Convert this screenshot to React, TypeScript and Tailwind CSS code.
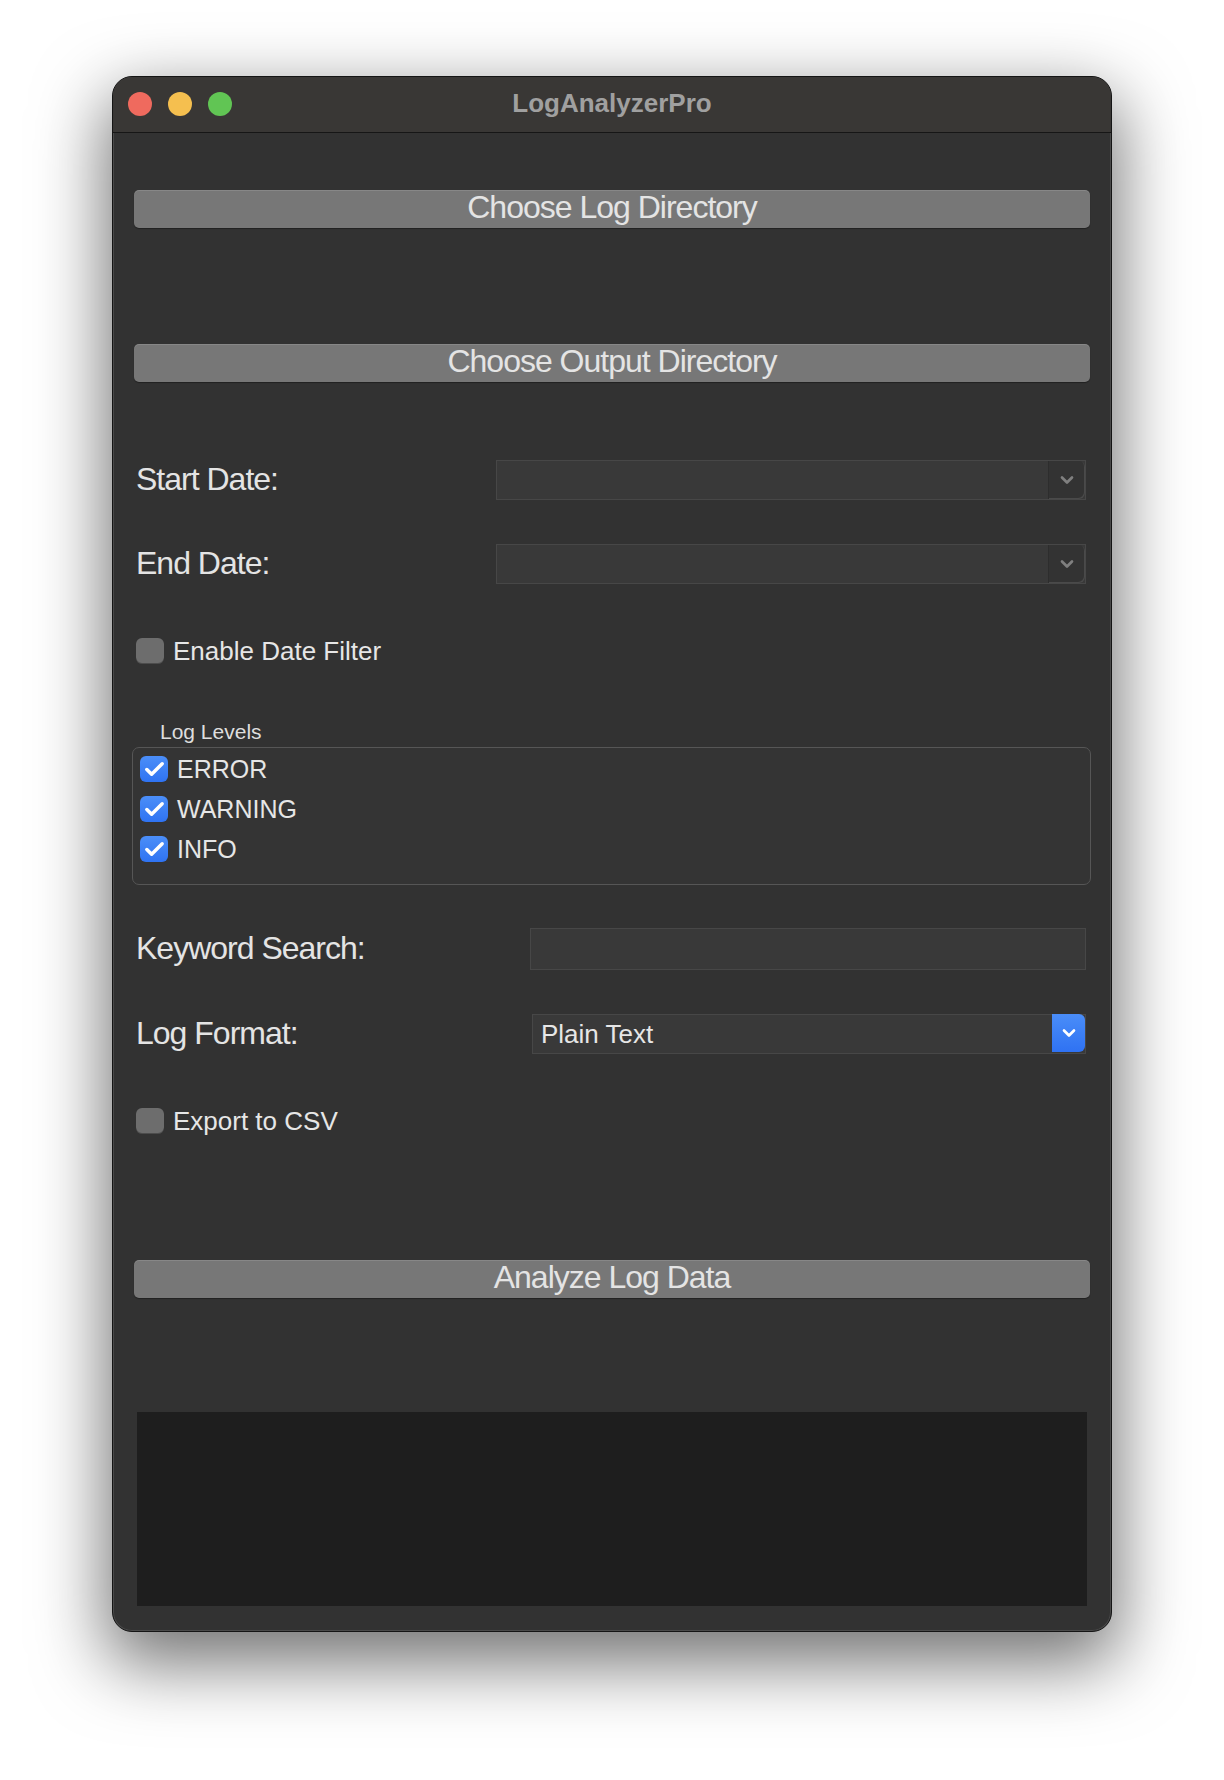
import { Check, ChevronDown } from 'lucide-react';

// Label column text, rendered like Tk's condensed Helvetica
const labelCls = "font-['Liberation_Sans',Arial,sans-serif] text-[32px] leading-none tracking-[-1px] text-[#e4e4e4]";
const smallCls = "font-['Liberation_Sans',Arial,sans-serif] text-[26px] leading-none text-[#e6e6e6]";

function ToolButton({ label, className = '' }: { label: string; className?: string }) {
    return (
        <button
            className={`h-[38px] w-full rounded-[5px] bg-[#777777] shadow-[inset_0_1px_0_rgba(255,255,255,0.12),0_1px_1px_rgba(0,0,0,0.35)] flex items-center justify-center pb-[4px] ${labelCls} ${className}`}
        >
            {label}
        </button>
    );
}

function DateCombo() {
    return (
        <div className="flex-1 h-[40px] mr-[4px] flex bg-[#393939] border border-[#474747]">
            <div className="flex-1" />
            <div className="w-[37px] h-full border-l border-[#2d2d2d] rounded-r-[6px] bg-[#333333] shadow-[inset_-1px_-1px_0_#4a4a4a] flex items-center justify-center">
                <ChevronDown className="w-[20px] h-[20px] text-[#808080]" strokeWidth={3.2} />
            </div>
        </div>
    );
}

function PlainCheck({ label }: { label: string }) {
    return (
        <div className="flex items-center h-[26px] ml-[2px] gap-[9px]">
            <span className="w-[28px] h-[26px] rounded-[6px] bg-[#6d6d6d] shadow-[inset_0_-1px_0_rgba(0,0,0,0.3)]" />
            <span className={smallCls}>{label}</span>
        </div>
    );
}

function LevelCheck({ label }: { label: string }) {
    return (
        <div className="flex items-center h-[26px] gap-[9px]">
            <span className="w-[28px] h-[26px] rounded-[6px] bg-gradient-to-b from-[#4b8ef8] to-[#2f73f2] flex items-center justify-center">
                <Check className="w-[23px] h-[23px] text-white" strokeWidth={3.6} />
            </span>
            <span className="font-['Liberation_Sans',Arial,sans-serif] text-[25px] leading-none text-[#e6e6e6]">{label}</span>
        </div>
    );
}

export default function App() {
    return (
        <div className="min-h-[1780px] w-[1224px] bg-white pt-[76px] pl-[112px]">
            {/* Window */}
            <div className="w-[1000px] h-[1556px] rounded-[20px] overflow-hidden bg-[#323232] border border-[#151515] shadow-[0_26px_70px_6px_rgba(0,0,0,0.55),inset_0_0_0_1px_rgba(255,255,255,0.12)] flex flex-col">
                {/* Title bar */}
                <div className="relative h-[56px] shrink-0 bg-[#393735] border-b border-[#161616] flex items-center justify-center">
                    <div className="absolute left-[15px] top-[15px] flex gap-[16px]">
                        <span className="w-[24px] h-[24px] rounded-full bg-[#ef6a5e]" />
                        <span className="w-[24px] h-[24px] rounded-full bg-[#f5bf4f]" />
                        <span className="w-[24px] h-[24px] rounded-full bg-[#61c554]" />
                    </div>
                    <span className="font-['Liberation_Sans',Arial,sans-serif] font-bold text-[26px] text-[#a0a0a0] pb-[2px]">LogAnalyzerPro</span>
                </div>

                {/* Content */}
                <div className="flex flex-col px-[21px]">
                    <ToolButton label="Choose Log Directory" className="mt-[57px]" />
                    <ToolButton label="Choose Output Directory" className="mt-[116px]" />

                    <div className="mt-[78px] flex items-center h-[40px]">
                        <span className={`${labelCls} w-[362px] pl-[2px] pb-[2px]`}>Start Date:</span>
                        <DateCombo />
                    </div>
                    <div className="mt-[44px] flex items-center h-[40px]">
                        <span className={`${labelCls} w-[362px] pl-[2px] pb-[2px]`}>End Date:</span>
                        <DateCombo />
                    </div>

                    <div className="mt-[54px]">
                        <PlainCheck label="Enable Date Filter" />
                    </div>

                    <div className="mt-[56px] h-[24px] pl-[26px] flex items-center font-['Liberation_Sans',Arial,sans-serif] text-[21px] text-[#dedede]">
                        Log Levels
                    </div>
                    <div className="mt-[3px] -ml-[2px] w-[959px] h-[138px] rounded-[7px] border border-[#565656] bg-[#343434] pt-[8px] pl-[7px] flex flex-col gap-[14px]">
                        <LevelCheck label="ERROR" />
                        <LevelCheck label="WARNING" />
                        <LevelCheck label="INFO" />
                    </div>

                    <div className="mt-[43px] flex items-center h-[42px]">
                        <span className={`${labelCls} w-[396px] pl-[2px] pb-[2px]`}>Keyword Search:</span>
                        <div className="flex-1 h-full mr-[4px] bg-[#393939] border border-[#474747]" />
                    </div>

                    <div className="mt-[44px] flex items-center h-[40px]">
                        <span className={`${labelCls} w-[398px] pl-[2px] pb-[2px]`}>Log Format:</span>
                        <div className="flex-1 h-full mr-[4px] flex bg-[#393939] border border-[#474747]">
                            <span className={`${smallCls} flex-1 flex items-center pl-[8px] text-[#e2e2e2]`}>Plain Text</span>
                            <div className="w-[33px] h-full -my-px rounded-r-[6px] bg-gradient-to-b from-[#4a8df8] to-[#2f72f3] flex items-center justify-center">
                                <ChevronDown className="w-[20px] h-[20px] text-white" strokeWidth={3.2} />
                            </div>
                        </div>
                    </div>

                    <div className="mt-[54px]">
                        <PlainCheck label="Export to CSV" />
                    </div>

                    <ToolButton label="Analyze Log Data" className="mt-[126px]" />

                    <div className="mt-[114px] ml-[3px] mr-[3px] h-[194px] bg-[#1e1e1e]" />
                </div>
            </div>
        </div>
    );
}
